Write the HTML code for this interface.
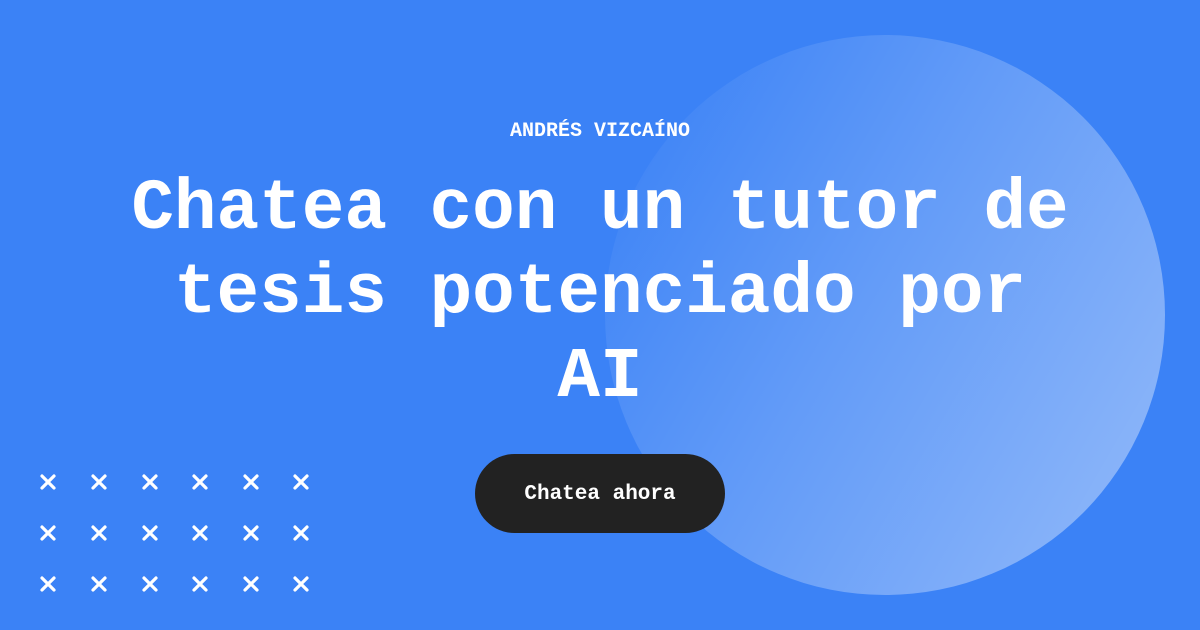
<!DOCTYPE html>
<html><head><meta charset="utf-8"><style>
html,body{margin:0;padding:0}
body{width:1200px;height:630px;background:#3b82f6;position:relative;overflow:hidden;font-family:"Liberation Mono",monospace;color:#fff}
.circle{position:absolute;left:605px;top:35px;width:560px;height:560px;border-radius:50%;background:linear-gradient(120deg,rgba(255,255,255,0.0) 5%,rgba(255,255,255,0.2) 45%,rgba(255,255,255,0.45) 100%)}
.hdr{position:absolute;left:0;width:1200px;top:119px;text-align:center;font-size:20px;font-weight:bold;line-height:26px}
.title{position:absolute;left:0;width:1200px;top:168px;text-align:center;font-size:71px;font-weight:bold;line-height:84px}
.btn{position:absolute;left:475px;top:454px;width:250px;height:79px;border-radius:40px;background:#222;color:#fff;font-size:21px;font-weight:bold;text-align:center;line-height:82px}
svg{position:absolute;left:0;top:0}
</style></head><body>
<div class="circle"></div>
<div class="hdr">ANDRÉS VIZCAÍNO</div>
<div class="title">Chatea con un tutor de<br>tesis potenciado por<br>AI</div>
<div class="btn">Chatea ahora</div>
<svg width="400" height="630" stroke="#fff" stroke-width="3.2" stroke-linecap="round">
<g id="r">
<path d="M42 476l12 12M54 476l-12 12"/><path d="M93 476l12 12M105 476l-12 12"/><path d="M144 476l12 12M156 476l-12 12"/><path d="M194 476l12 12M206 476l-12 12"/><path d="M245 476l12 12M257 476l-12 12"/><path d="M295 476l12 12M307 476l-12 12"/>
</g>
<use href="#r" y="51"/><use href="#r" y="102"/>
</svg>
</body></html>
